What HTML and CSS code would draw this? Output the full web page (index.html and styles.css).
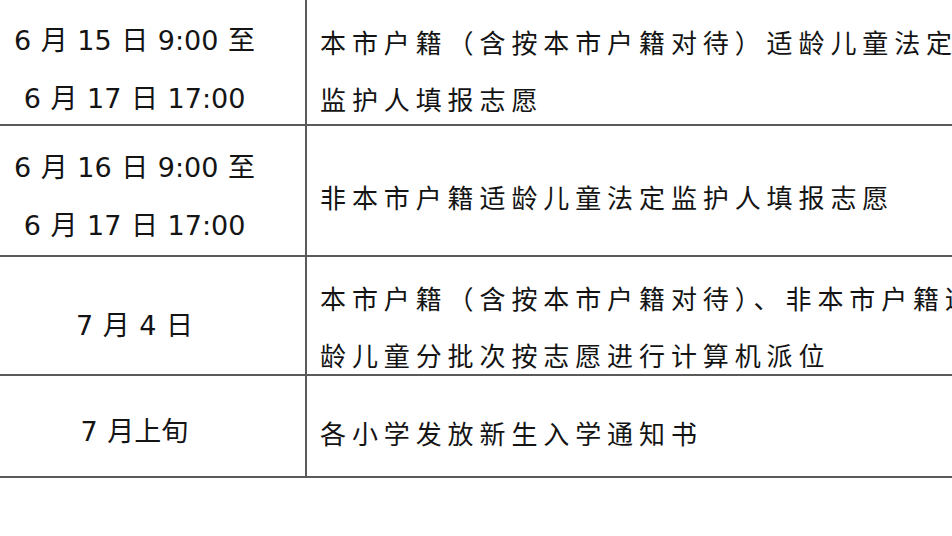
FILE: index.html
```html
<!DOCTYPE html>
<html lang="zh-CN">
<head>
<meta charset="utf-8">
<title>时间安排</title>
<link rel="stylesheet" href="styles.css">
</head>
<body>
<div class="sheet">
  <div class="row r1">
    <div class="cell date">6 月 15 日 9:00 至<br>6 月 17 日 17:00</div>
    <div class="cell desc">本市户籍（含按本市户籍对待）适龄儿童法定<br>监护人填报志愿</div>
  </div>
  <div class="row r2">
    <div class="cell date">6 月 16 日 9:00 至<br>6 月 17 日 17:00</div>
    <div class="cell desc">非本市户籍适龄儿童法定监护人填报志愿</div>
  </div>
  <div class="row r3">
    <div class="cell date">7 月 4 日</div>
    <div class="cell desc">本市户籍（含按本市户籍对待）、非本市户籍适<br>龄儿童分批次按志愿进行计算机派位</div>
  </div>
  <div class="row r4">
    <div class="cell date">7 月上旬</div>
    <div class="cell desc">各小学发放新生入学通知书</div>
  </div>
</div>
</body>
</html>
```

FILE: styles.css
```css
html, body {
  margin: 0;
  padding: 0;
  background: #fff;
  overflow: hidden;
}

body {
  width: 952px;
  height: 536px;
  font-family: "DejaVu Sans", "Noto Sans CJK SC", sans-serif;
  color: #141414;
}

.sheet {
  margin-left: -34px;
  width: 1120px;
}

.row {
  display: grid;
  grid-template-columns: 341px 1fr;
  border-bottom: 2px solid #5a5a5a;
}

.r1 { height: 124px; }
.r2 { height: 129px; }
.r3 { height: 117px; }
.r4 { height: 100px; }

.cell {
  display: flex;
  align-items: center;
  padding-top: 12px;
  white-space: nowrap;
}

.date {
  justify-content: center;
  text-align: center;
  border-right: 2px solid #5a5a5a;
  padding-right: 2px;
  font-size: 27px;
  line-height: 58px;
  word-spacing: 1px;
}

.desc {
  padding-left: 13px;
  font-family: "Noto Sans CJK SC", sans-serif;
  font-size: 26px;
  letter-spacing: 5.9px;
  line-height: 57px;
}
```
